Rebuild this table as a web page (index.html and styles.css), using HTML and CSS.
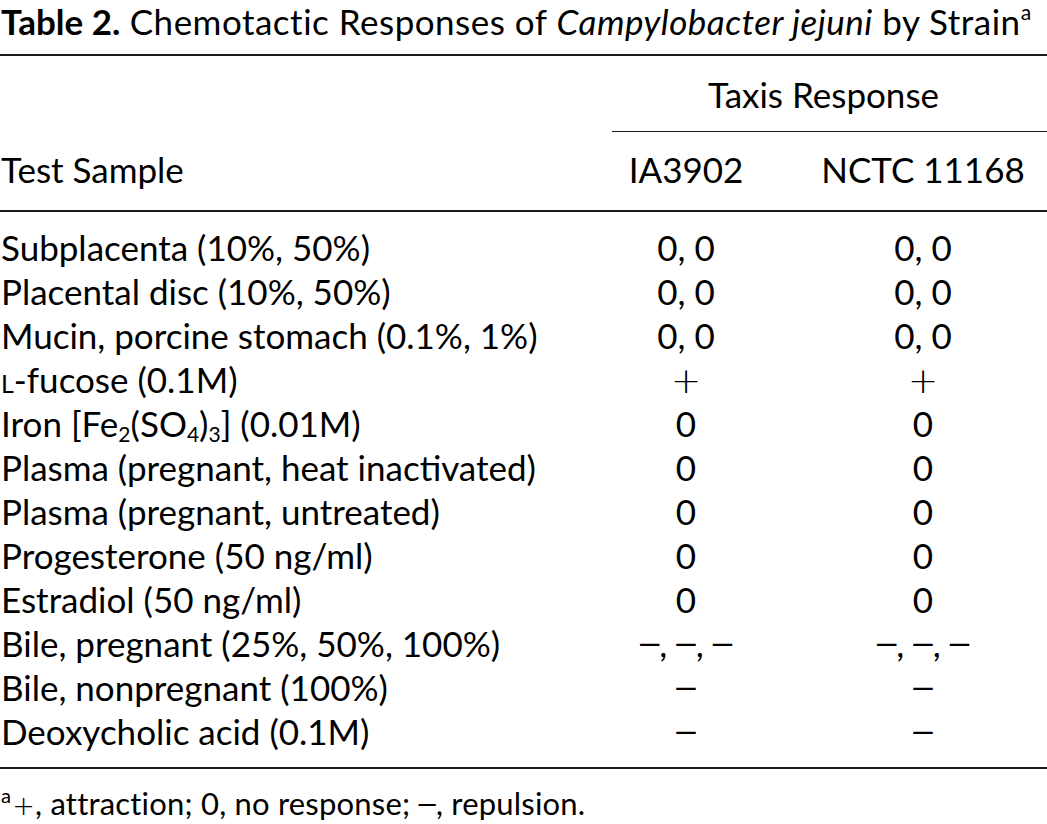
FILE: index.html
```html
<!DOCTYPE html>
<html lang="en">
<head>
<meta charset="utf-8">
<title>Table 2</title>
<link rel="stylesheet" href="styles.css">
</head>
<body>
<div class="page">
  <h1 class="caption"><b class="label">Table 2.</b> Chemotactic Responses of <i>Campylobacter jejuni</i> by Strain<sup class="sup">a</sup></h1>
  <table class="data">
    <colgroup>
      <col class="w-sample">
      <col class="w-a">
      <col class="w-b">
    </colgroup>
    <thead>
      <tr class="row-group">
        <th class="col-sample"></th>
        <th class="col-group" colspan="2">Taxis Response</th>
      </tr>
      <tr class="row-head">
        <th class="col-sample">Test Sample</th>
        <th class="col-a">IA3902</th>
        <th class="col-b">NCTC 11168</th>
      </tr>
    </thead>
    <tbody>
      <tr><td class="col-sample">Subplacenta (10%, 50%)</td><td class="col-a">0, 0</td><td class="col-b">0, 0</td></tr>
      <tr><td class="col-sample">Placental disc (10%, 50%)</td><td class="col-a">0, 0</td><td class="col-b">0, 0</td></tr>
      <tr><td class="col-sample">Mucin, porcine stomach (0.1%, 1%)</td><td class="col-a">0, 0</td><td class="col-b">0, 0</td></tr>
      <tr><td class="col-sample"><span class="sc">l</span>-fucose (0.1M)</td><td class="col-a"><span class="plus">+</span></td><td class="col-b"><span class="plus">+</span></td></tr>
      <tr><td class="col-sample">Iron [Fe<sub class="sub">2</sub>(SO<sub class="sub">4</sub>)<sub class="sub">3</sub>] (0.01M)</td><td class="col-a">0</td><td class="col-b">0</td></tr>
      <tr><td class="col-sample">Plasma (pregnant, heat inactivated)</td><td class="col-a">0</td><td class="col-b">0</td></tr>
      <tr><td class="col-sample">Plasma (pregnant, untreated)</td><td class="col-a">0</td><td class="col-b">0</td></tr>
      <tr><td class="col-sample">Progesterone (50 ng/ml)</td><td class="col-a">0</td><td class="col-b">0</td></tr>
      <tr><td class="col-sample">Estradiol (50 ng/ml)</td><td class="col-a">0</td><td class="col-b">0</td></tr>
      <tr><td class="col-sample">Bile, pregnant (25%, 50%, 100%)</td><td class="col-a"><span class="dash">–</span>, <span class="dash">–</span>, <span class="dash">–</span></td><td class="col-b"><span class="dash">–</span>, <span class="dash">–</span>, <span class="dash">–</span></td></tr>
      <tr><td class="col-sample">Bile, nonpregnant (100%)</td><td class="col-a"><span class="dash">–</span></td><td class="col-b"><span class="dash">–</span></td></tr>
      <tr class="last"><td class="col-sample">Deoxycholic acid (0.1M)</td><td class="col-a"><span class="dash">–</span></td><td class="col-b"><span class="dash">–</span></td></tr>
    </tbody>
  </table>
  <p class="note"><sup class="sup note-sup">a</sup><span class="plus-note">+</span>, attraction; 0, no response; <span class="dash">–</span>, repulsion.</p>
</div>
</body>
</html>
```

FILE: styles.css
```css
html, body {
  margin: 0;
  padding: 0;
  background: #ffffff;
}

body {
  font-family: Lato, "Open Sans", "Liberation Sans", sans-serif;
  color: #000000;
}

.page {
  width: 1047px;
}

.caption {
  margin: 0 0 12px 0;
  padding-left: 1px;
  font-size: 35px;
  line-height: 42px;
  font-weight: 400;
  letter-spacing: 0.5px;
  white-space: nowrap;
}

.label {
  font-weight: 700;
  letter-spacing: 0;
}

.caption i {
  font-style: italic;
}

.sup {
  font-size: 0.6em;
  line-height: 0;
  vertical-align: 0.7em;
}

.note-sup {
  font-size: 0.65em;
  vertical-align: 0.6em;
  margin-right: 1px;
}

.data {
  width: 1047px;
  border-collapse: separate;
  border-spacing: 0;
  border-top: 2px solid #1a1a1a;
  table-layout: fixed;
  font-size: 35px;
  line-height: 44px;
}

.w-sample {
  width: 612px;
}

.w-a {
  width: 148px;
}

.w-b {
  width: 287px;
}

.data th,
.data td {
  padding: 0;
  font-weight: 400;
  white-space: nowrap;
}

.col-sample {
  text-align: left;
  padding-left: 1px !important;
}

.col-a {
  text-align: center;
}

.col-b {
  text-align: center;
  padding-left: 39px !important;
}

.row-group th {
  padding-top: 16px;
  padding-bottom: 15px;
}

.col-group {
  text-align: center;
  padding-right: 12px !important;
  border-bottom: 1.5px solid #1a1a1a;
}

.row-head th {
  padding-top: 15px;
  padding-bottom: 19px;
  border-bottom: 2px solid #1a1a1a;
}

.data tbody tr:first-child td {
  padding-top: 13px;
}

.data tbody tr.last td {
  padding-bottom: 14px;
  border-bottom: 2px solid #1a1a1a;
}

.sc {
  font-variant: small-caps;
}

.sub {
  font-size: 0.6em;
  line-height: 0;
  vertical-align: -0.25em;
}

.plus {
  font-family: "DejaVu Sans", sans-serif;
  font-weight: 200;
  font-size: 36px;
  line-height: 0;
}

.dash {
  font-family: "Liberation Sans", sans-serif;
  vertical-align: 3px;
  line-height: 0;
}

.note {
  margin: 16px 0 0 0;
  padding-left: 1px;
  font-size: 31px;
  line-height: 36px;
  letter-spacing: 0.2px;
  white-space: nowrap;
}

.note .dash {
  vertical-align: 2px;
}

.plus-note {
  font-family: "DejaVu Sans", sans-serif;
  font-weight: 200;
  font-size: 27px;
  line-height: 0;
}
```
